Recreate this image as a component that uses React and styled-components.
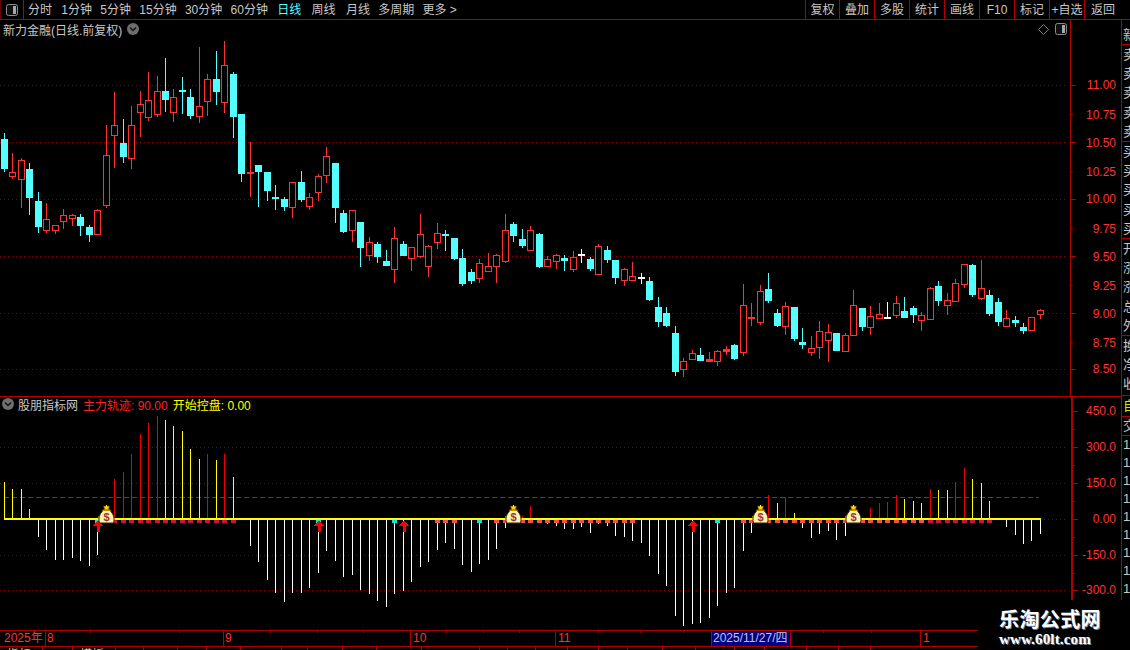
import React from 'react';
import styled, { createGlobalStyle } from 'styled-components';

const LINE = '#b00000';
const RED = '#ff3232';
const CYAN = '#54ffff';
const GRID = '#8a0000';

const GlobalStyle = createGlobalStyle`
  html, body { margin: 0; padding: 0; background: #000; }
  body { font-family: "Liberation Sans", "Noto Sans CJK SC", sans-serif; font-size: 12px; }
`;

// [colour, high, body top, body bottom, low], in page pixels
const CANDLES = [
  ['c',133,139,169,172],['r',153,172,177,179],['r',158,160,180,208],['c',163,169,198,215],['c',192,201,227,233],
  ['r',203,219,231,233],['r',225,225,231,234],['r',209,215,222,229],['r',214,215,219,226],['c',214,217,226,236],
  ['c',225,227,235,242],['r',209,210,235,235],['r',125,155,206,208],['r',92,125,136,168],['c',119,143,157,163],
  ['r',106,125,159,169],['r',91,104,113,137],['r',72,100,118,121],['r',76,91,115,117],['c',58,91,100,112],
  ['r',89,97,113,122],['c',77,90,92,114],['c',89,97,116,119],['r',47,106,117,123],['r',74,79,102,116],
  ['c',51,79,92,105],['r',41,65,103,113],['c',72,74,117,138],['c',114,114,174,182],['r',142,172,174,197],
  ['c',165,165,172,207],['c',172,172,191,201],['c',185,197,199,210],['c',197,199,207,211],['r',182,182,208,218],
  ['c',171,182,200,202],['r',193,197,207,210],['r',174,176,193,201],['r',147,156,176,183],['c',163,163,208,223],
  ['c',210,213,232,233],['r',210,210,231,242],['c',222,222,248,267],['r',237,242,256,261],['c',242,244,257,263],
  ['c',250,261,266,266],['r',227,238,270,283],['c',241,244,256,256],['r',247,247,259,271],['r',214,234,257,258],
  ['r',245,246,267,277],['r',223,233,243,249],['c',230,234,236,251],['c',238,238,259,260],['c',249,258,284,286],
  ['c',269,272,281,284],['r',259,263,279,283],['r',253,266,272,272],['r',254,255,267,283],['r',214,230,262,263],
  ['c',222,224,236,242],['c',229,239,246,248],['r',226,230,251,251],['c',233,234,267,268],['r',256,259,267,267],
  ['r',254,255,262,269],['c',255,258,261,271],['r',251,257,270,272],['w',249,254,255,263],['c',257,259,269,271],
  ['r',244,246,275,275],['c',246,250,260,263],['c',260,260,278,284],['r',268,269,281,286],['r',262,276,281,281],
  ['w',273,277,278,284],['c',277,281,300,301],['c',297,307,322,327],['c',307,313,326,327],['c',326,333,372,376],
  ['r',358,361,370,377],['r',350,353,360,360],['c',348,355,361,361],['r',352,359,362,362],['r',350,351,362,366],
  ['r',346,349,352,355],['c',344,345,359,360],['r',284,305,353,356],['r',303,317,319,326],['r',285,291,323,325],
  ['c',273,289,301,303],['c',309,313,326,327],['r',302,306,327,335],['c',307,307,339,341],['c',328,342,345,349],
  ['r',336,348,353,356],['r',321,331,348,359],['r',324,332,341,362],['c',333,333,351,351],['r',333,335,352,352],
  ['r',290,305,336,336],['c',308,308,327,331],['r',306,316,328,335],['r',303,314,319,319],['w',302,317,318,319],
  ['r',296,303,316,318],['c',297,311,318,318],['c',306,308,315,323],['r',312,315,321,331],['r',287,288,320,320],
  ['c',281,286,301,306],['r',293,300,306,315],['r',279,283,302,302],['r',264,264,285,288],['c',264,265,295,297],
  ['r',260,288,299,300],['c',290,295,314,316],['c',298,302,322,326],['r',310,318,327,327],['c',316,320,323,327],
  ['c',323,327,331,334],['r',317,317,331,331],['r',309,310,315,319],
];

// indicator bars: [colour, end y]; baseline sits at 519
const y = v => ['#ffff00', v];
const r = v => ['#ee0000', v];
const w = v => ['#ffffff', v];
const BARS = [
  y(482),y(489),y(489),y(509),w(537),w(550),w(560),w(560),w(558),w(561),
  w(566),w(555),null,r(479),r(472),r(454),r(434),r(423),r(416),y(420),
  y(426),y(431),y(449),y(459),r(454),y(460),r(454),y(477),null,w(546),
  w(562),w(580),w(593),w(602),w(593),w(593),w(588),w(573),w(551),w(561),
  w(577),w(575),w(590),w(594),w(601),w(607),w(594),w(591),w(582),w(567),
  w(562),w(550),w(543),w(549),w(565),w(572),w(564),w(560),w(549),w(528),
  null,r(516),r(506),null,w(524),w(526),w(529),w(529),w(527),w(533),
  w(524),w(526),w(536),w(537),w(541),w(543),w(556),w(574),w(586),w(616),
  w(626),w(624),w(623),w(618),w(606),w(593),w(588),w(551),w(533),null,
  r(495),y(503),r(497),y(513),w(528),w(538),w(534),w(531),w(540),w(536),
  null,null,r(508),r(503),r(502),r(495),y(499),y(501),y(503),r(489),
  y(490),y(490),r(482),r(468),y(479),y(483),y(501),null,w(527),w(535),
  w(544),w(541),w(534),
];

const range = (a, b) => Array.from({ length: b - a + 1 }, (_, i) => a + i);
const MARKS = {
  '#c8104c': [...range(13, 27), ...range(109, 116)],
  '#f05050': [51, 52, 53, 58, 59, ...range(61, 74), 87, 88, ...range(90, 99), ...range(101, 108)],
  '#00e6e6': [11, 37, 46, 56, 84],
};
const ARROWS = [11, 37, 47, 81];
const BAGS = [12, 60, 89, 100];

const PRICE_LABELS = [
  ['11.00',85],['10.75',115],['10.50',143],['10.25',172],['10.00',199],['9.75',229],
  ['9.50',257],['9.25',286],['9.00',314],['8.75',343],['8.50',369],
];
const PRICE_GRID = [85, 142, 199, 256, 313, 369];
const IND_LABELS = [['450.0',411],['300.0',447],['150.0',483],['0.00',519],['-150.0',555],['-300.0',590]];
const IND_GRID = [447, 483, 555, 590];
const IND_MINOR = [429, 465, 501, 537, 573];

const barX = i => 4 + Math.floor(8.495 * i + 0.1);

const Page = styled.div`
  position: relative;
  width: 1130px;
  height: 650px;
  overflow: hidden;
  background: #000;
  color: #c8c8c8;
`;

const Toolbar = styled.div`
  display: flex;
  height: 19px;
  border-bottom: 1px solid ${LINE};
`;

const LayoutBox = styled.div`
  width: 22px;
  display: flex;
  align-items: center;
  justify-content: center;
  border-left: 1px solid #700000;
  border-right: 1px solid ${LINE};
`;

const PeriodTabs = styled.div`
  display: flex;
  gap: 8.3px;
  margin-left: 4px;
  flex: 1;
`;

const Tab = styled.span`
  line-height: 20px;
  height: 19px;
  white-space: nowrap;
  margin-left: ${p => p.$shift || 0}px;
  color: ${p => (p.$active ? CYAN : '#c8c8c8')};
`;

const ToolButtons = styled.div`
  display: flex;
  margin-right: 9px;
`;

const ToolButton = styled.div`
  width: ${p => p.$w}px;
  height: 19px;
  box-sizing: border-box;
  text-align: center;
  line-height: 20px;
  white-space: nowrap;
  border-left: 1px solid ${LINE};
`;

const Body = styled.div`
  display: flex;
  height: 630px;
`;

const Charts = styled.div`
  width: 1121px;
  flex: none;
`;

const PricePanel = styled.div`
  position: relative;
  height: 376px;
`;

const IndicatorPanel = styled.div`
  position: relative;
  height: 233px;
  border-top: 1px solid ${LINE};
`;

const Plot = styled.svg`
  display: block;
  font-family: "Liberation Sans", sans-serif;
  font-size: 12px;
`;

const TitleRow = styled.div`
  position: absolute;
  left: ${p => p.$left}px;
  top: ${p => p.$top}px;
  display: flex;
  align-items: center;
  height: 16px;
  gap: ${p => p.$gap}px;
  white-space: nowrap;
`;

const Legend = styled.span`
  margin-left: 1px;
  color: ${p => p.$color};
`;

const CornerIcons = styled.div`
  position: absolute;
  right: 54px;
  top: 3px;
  display: flex;
  align-items: center;
  gap: 6px;
`;

const Sidebar = styled.div`
  flex: 1;
  display: flex;
  flex-direction: column;
  overflow: hidden;
  border-left: 1px solid ${LINE};
`;

const SideCell = styled.div`
  height: ${p => p.$h}px;
  flex: none;
  padding-left: 1px;
  overflow: hidden;
  border-bottom: 1px solid ${p => (p.$plain ? '#000' : LINE)};
  color: ${p => p.$color || '#c8c8c8'};
`;

const SideRow = styled.div`
  height: ${p => p.$h || 19.2}px;
  line-height: ${p => p.$h || 19.2}px;
  width: 14px;
  font-size: 13px;
`;

const DateAxis = styled.div`
  position: relative;
  display: flex;
  height: 15px;
  border-top: 1px solid ${LINE};
  border-bottom: 1px solid ${LINE};
  color: ${RED};
  line-height: 15px;
`;

const DateCell = styled.div`
  width: ${p => p.$w}px;
  flex: none;
  box-sizing: border-box;
  padding-left: ${p => p.$pad ?? 1}px;
  border-right: 1px solid ${LINE};
  white-space: nowrap;
`;

const CurrentDate = styled(DateCell)`
  background: #000080;
  color: #c0c0e8;
  padding-left: 1px;
`;

const DateTick = styled.i`
  position: absolute;
  top: 0;
  left: ${p => p.$x}px;
  width: 1px;
  height: 2px;
  background: ${LINE};
`;

const Footer = styled.div`
  display: flex;
  height: 3px;
  overflow: hidden;
`;

const FooterCell = styled.div`
  flex: none;
  box-sizing: border-box;
  border-right: 1px solid ${LINE};
  padding: 1px 0 0 7px;
  line-height: 14px;
  color: #c8c8c8;
  white-space: nowrap;
`;

const Watermark = styled.div`
  position: absolute;
  right: 0;
  bottom: 0;
  width: 152px;
  height: 50px;
  box-sizing: border-box;
  padding: 7px 0 0 21px;
  background: #000;
  color: #fff;
  display: flex;
  flex-direction: column;
`;

const WatermarkTitle = styled.div`
  font-family: "Noto Sans CJK SC", sans-serif;
  font-weight: 700;
  font-size: 20px;
  line-height: 24px;
  letter-spacing: 0.4px;
  text-shadow: 1px 1px 0 #6a7fa0;
  white-space: nowrap;
`;

const WatermarkUrl = styled.div`
  font-family: "Liberation Serif", serif;
  font-weight: 700;
  font-size: 15px;
  line-height: 16px;
  letter-spacing: 0.15px;
  text-shadow: 1px 1px 0 #6a7fa0;
  white-space: nowrap;
`;

const LayoutIcon = () => (
  <svg width="12" height="12" viewBox="0 0 12 12">
    <rect x="0.5" y="0.5" width="11" height="11" rx="2" fill="#111" stroke="#8c8c8c" />
    <rect x="7" y="2" width="3" height="8" fill="#a8a8a8" />
  </svg>
);

const DiamondIcon = () => (
  <svg width="11" height="11" viewBox="0 0 11 11">
    <path d="M5.5 .5 L10.5 5.5 L5.5 10.5 L.5 5.5 Z" fill="none" stroke="#808080" />
  </svg>
);

const ChevronDot = () => (
  <svg width="12" height="12" viewBox="0 0 12 12">
    <circle cx="6" cy="6" r="6" fill="#6e6e6e" />
    <path d="M3 4.5 L6 7.5 L9 4.5" fill="none" stroke="#111" strokeWidth="1.4" />
  </svg>
);

const Candle = ({ data, i }) => {
  const [kind, hi, top, bot, lo] = data;
  const cx = barX(i);
  const color = kind === 'c' ? CYAN : kind === 'w' ? '#ffffff' : RED;
  const thin = bot - top <= 3;
  return (
    <g>
      <rect x={cx} y={hi} width="1" height={Math.max(lo - hi, 1)} fill={color} />
      {thin || kind === 'c' ? (
        <rect x={cx - 3} y={top} width="7" height={Math.max(bot - top, 2)} fill={color} />
      ) : (
        <rect x={cx - 2.5} y={top + 0.5} width="6" height={bot - top - 1} fill="#000" stroke={color} />
      )}
    </g>
  );
};

const MoneyBag = ({ x }) => (
  <g transform={`translate(${x + 0.5} 515)`}>
    <circle cx="-7" cy="2" r="1.2" fill="#ffff00" />
    <path d="M-7 8 C-9 1 -5 -3 -3 -5 L3 -5 C5 -3 9 1 7 8 Z" fill="#fff2b0" stroke="#3a2400" strokeWidth="1" />
    <path d="M-3 -9 L3 -9 L2 -5 L-2 -5 Z" fill="#ffd000" stroke="#4a3000" strokeWidth="0.7" />
    <path d="M0 -10 L0 -8" stroke="#ffff00" />
    <rect x="-4" y="-5.4" width="8" height="1.4" fill="#c89000" />
    <text x="0" y="6" textAnchor="middle" fontSize="11" fontWeight="700" fill="#9a3a30">$</text>
  </g>
);

const UpArrow = ({ x }) => (
  <g transform={`translate(${x + 1} 520)`}>
    <path d="M0 0 L5 6 L1.5 6 L1.5 12 L-1.5 12 L-1.5 6 L-5 6 Z" fill="#ff0000" />
  </g>
);

const AxisLine = ({ x, top, height, width = 1 }) => (
  <rect x={x} y={top} width={width} height={height} fill={LINE} />
);

const DottedLine = ({ y: at, from = 0, to = 1067, color = GRID, dash = '1 3' }) => (
  <line x1={from} x2={to} y1={at + 0.5} y2={at + 0.5} stroke={color} strokeDasharray={dash} />
);

const AxisLabel = ({ at, children }) => (
  <text x="1116" y={at + 4} textAnchor="end" fill={RED}>{children}</text>
);

const PriceChart = () => (
  <Plot width="1121" height="376" viewBox="0 20 1121 376" shapeRendering="crispEdges">
    {PRICE_GRID.map(at => <DottedLine key={at} y={at} />)}
    {CANDLES.map((c, i) => <Candle key={i} data={c} i={i} />)}
    <AxisLine x={1070} top={20} height={376} />
    {PRICE_GRID.map(at => <rect key={at} x="1070" y={at} width="6" height="1" fill={LINE} />)}
    {[114, 171, 228, 285, 342].map(at => <rect key={at} x="1070" y={at} width="3" height="1" fill={LINE} />)}
    {PRICE_LABELS.map(([t, at]) => <AxisLabel key={t} at={at}>{t}</AxisLabel>)}
  </Plot>
);

const IndicatorChart = () => (
  <Plot width="1121" height="233" viewBox="0 397 1121 233" shapeRendering="crispEdges">
    {IND_GRID.map(at => <DottedLine key={at} y={at} />)}
    <DottedLine y={519} from={1040} to={1067} />
    <DottedLine y={497} from={4} to={1039} color="#d01010" dash="5 3" />
    {BARS.map((b, i) => {
      if (!b) return null;
      const [color, end] = b;
      return <rect key={i} x={barX(i)} y={Math.min(end, 519)} width="1" height={Math.abs(end - 519)} fill={color} />;
    })}
    {Object.entries(MARKS).map(([color, list]) =>
      list.map(i => <rect key={i} x={barX(i) - 2} y="520" width="5" height="3" fill={color} />)
    )}
    <rect x="4" y="518" width="1037" height="2" fill="#ffff00" />
    {ARROWS.map(i => <UpArrow key={i} x={barX(i)} />)}
    <g shapeRendering="auto">
      {BAGS.map(i => <MoneyBag key={i} x={barX(i)} />)}
    </g>
    <AxisLine x={1071} top={397} height={233} width={2} />
    {IND_LABELS.map(([t, at]) => <rect key={t} x="1073" y={at} width="5" height="1" fill={LINE} />)}
    {IND_MINOR.map(at => <rect key={at} x="1073" y={at} width="2" height="1" fill={LINE} />)}
    {IND_LABELS.map(([t, at]) => <AxisLabel key={t} at={at}>{t}</AxisLabel>)}
  </Plot>
);

// label and extra space in front of it
const TABS = [['分时',0],['1分钟',1],['5分钟',0],['15分钟',0],['30分钟',0],['60分钟',0],['日线',1],['周线',2],['月线',2],['多周期',0],['更多 >',0]];
const TOOLS = [['复权',34],['叠加',35],['多股',35],['统计',35],['画线',35],['F10',35],['标记',35],['+自选',35],['返回',37]];
const DATE_TICKS = [90, 179, 270, 317, 363, 446, 483, 519, 598, 640, 683, 823, 871];
const FOOTER_CELLS = [43, 30, 43, 28, 34, 29, 34, 41, 26, 35, 34, 45, 58, 28, 28, 32, 31, 29, 35, 33, 39, 30, 42, 32, 32];
const FOOTER_TEXT = ['指标', '', '模板'];

const App = () => (
  <Page>
    <GlobalStyle />
    <Toolbar>
      <LayoutBox><LayoutIcon /></LayoutBox>
      <PeriodTabs>
        {TABS.map(([t, shift]) => <Tab key={t} $shift={shift} $active={t === '日线'}>{t}</Tab>)}
      </PeriodTabs>
      <ToolButtons>
        {TOOLS.map(([t, width]) => <ToolButton key={t} $w={width}>{t}</ToolButton>)}
      </ToolButtons>
    </Toolbar>
    <Body>
      <Charts>
        <PricePanel>
          <PriceChart />
          <TitleRow $left={3} $top={1} $gap={5}>
            <span>新力金融(日线.前复权)</span>
            <ChevronDot />
          </TitleRow>
          <CornerIcons>
            <DiamondIcon />
            <LayoutIcon />
          </CornerIcons>
        </PricePanel>
        <IndicatorPanel>
          <IndicatorChart />
          <TitleRow $left={2} $top={-1} $gap={4}>
            <ChevronDot />
            <span>股朋指标网</span>
            <Legend $color="#ff2020">主力轨迹: 90.00</Legend>
            <Legend $color="#ffff00">开始控盘: 0.00</Legend>
          </TitleRow>
        </IndicatorPanel>
        <DateAxis>
          <DateCell $w={46} $pad={4}>2025年</DateCell>
          <DateCell $w={178}>8</DateCell>
          <DateCell $w={187}>9</DateCell>
          <DateCell $w={145} $pad={2}>10</DateCell>
          <DateCell $w={156} $pad={2}>11</DateCell>
          <CurrentDate $w={79}>2025/11/27/四</CurrentDate>
          <DateCell $w={130} />
          <DateCell $w={58} $pad={2}>1</DateCell>
          {DATE_TICKS.map(x => <DateTick key={x} $x={x} />)}
        </DateAxis>
        <Footer>
          {FOOTER_CELLS.map((width, i) => (
            <FooterCell key={i} style={{ width }}>{FOOTER_TEXT[i]}</FooterCell>
          ))}
        </Footer>
      </Charts>
      <Sidebar>
        <SideCell $h={4} $plain />
        <SideCell $h={19}><SideRow>新</SideRow></SideCell>
        <SideCell $h={96}>{[1, 2, 3, 4, 5].map(k => <SideRow key={k}>卖</SideRow>)}</SideCell>
        <SideCell $h={96}>{[1, 2, 3, 4, 5].map(k => <SideRow key={k}>买</SideRow>)}</SideCell>
        <SideCell $h={96}>{['开', '涨', '涨', '总', '外'].map((t, k) => <SideRow key={k}>{t}</SideRow>)}</SideCell>
        <SideCell $h={59}>{['换', '净', '收'].map((t, k) => <SideRow key={k}>{t}</SideRow>)}</SideCell>
        <SideCell $h={20} $color="#e0e000"><SideRow $h={20}>自</SideRow></SideCell>
        <SideCell $h={18}><SideRow $h={18}>交</SideRow></SideCell>
        <SideCell $h={200} $plain>
          {range(1, 10).map(k => <SideRow key={k} $h={18}>1</SideRow>)}
        </SideCell>
      </Sidebar>
    </Body>
    <Watermark>
      <WatermarkTitle>乐淘公式网</WatermarkTitle>
      <WatermarkUrl>www.60lt.com</WatermarkUrl>
    </Watermark>
  </Page>
);

export default App;
